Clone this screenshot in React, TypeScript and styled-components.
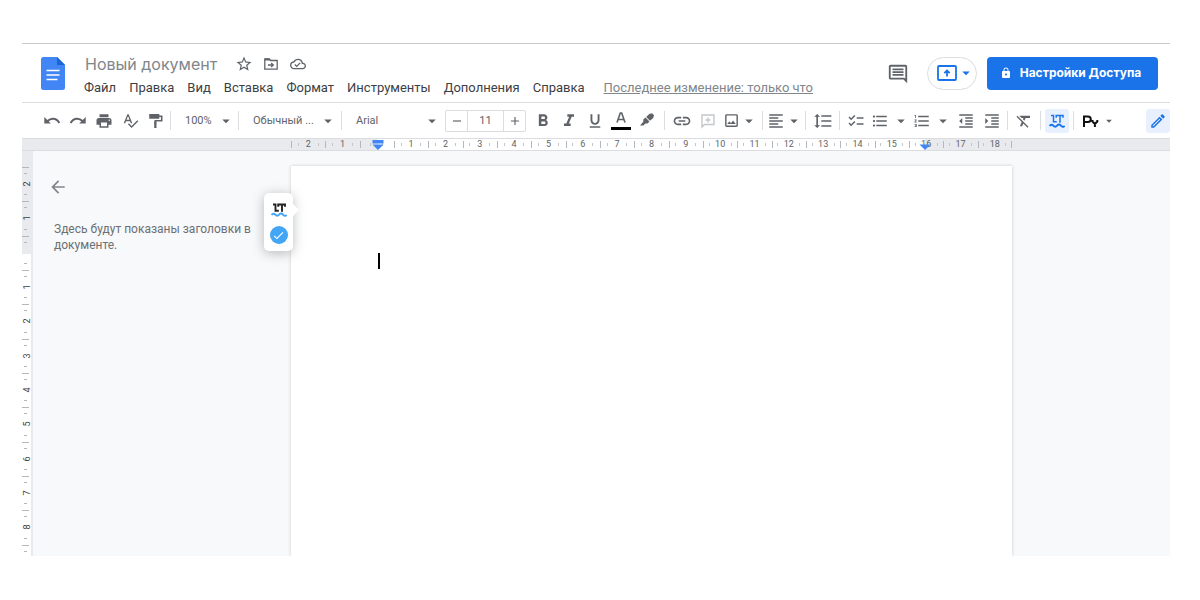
import React from "react";
import styled, { createGlobalStyle } from "styled-components";
import {
  MdAdd, MdArrowBack, MdArrowDropDown, MdCheck, MdChecklist, MdFormatAlignLeft, MdFormatBold,
  MdFormatClear, MdFormatIndentDecrease, MdFormatIndentIncrease, MdFormatItalic,
  MdFormatLineSpacing, MdFormatListBulleted, MdFormatListNumbered, MdFormatUnderlined, MdLink,
  MdOutlineCloudDone, MdOutlineComment, MdOutlineEdit, MdOutlineImage,
  MdLock, MdPrint, MdRemove, MdSpellcheck, MdStarOutline,
} from "react-icons/md";

const GlobalStyle = createGlobalStyle`
  *, *::before, *::after { box-sizing: border-box; }
  body { margin: 0; background: #fff; font-family: Roboto, "Liberation Sans", sans-serif; color: #3c4043; }
  button, input, select { font: inherit; color: inherit; }
  button { border: 0; padding: 0; background: none; cursor: pointer; }
  svg { display: block; flex: none; }
`;

const Page = styled.div`
  display: flex;
  flex-direction: column;
  height: 100vh;
  min-height: 400px;
  padding: 43px 30px 44px 22px;
`;

const Header = styled.header`
  display: flex;
  align-items: flex-start;
  flex: none;
  height: 60px;
  padding: 0 12px 0 19px;
  border-top: 1px solid #c9cacc;
  border-bottom: 1px solid #dadce0;
`;

const LogoLink = styled.a`
  margin-top: 13px;
`;

const TitleBlock = styled.div`
  flex: 1;
  min-width: 0;
  margin-left: 19px;
  padding-top: 10px;
`;

const TitleRow = styled.div`
  display: flex;
  align-items: center;
  height: 20px;
  color: #5f6368;
`;

const Title = styled.h1`
  margin: 0 19px 0 1px;
  font: 400 16px/20px Inter, sans-serif;
  color: #80868b;
  white-space: nowrap;
`;

const TitleIcon = styled.button`
  display: flex;
  justify-content: center;
  width: 16px;
  margin-right: 11px;
`;

const Menu = styled.nav`
  display: flex;
  align-items: center;
  gap: 13px;
  height: 28px;
  font-size: 13px;
  line-height: 20px;
  white-space: nowrap;
`;

const LastEdit = styled.a`
  margin-left: 6px;
  color: #80868b;
`;

const HeaderActions = styled.div`
  display: flex;
  align-items: center;
  margin-top: 13px;
  height: 33px;
  color: #5f6368;
`;

const PresentButton = styled.button`
  display: flex;
  align-items: center;
  justify-content: center;
  width: 50px;
  height: 33px;
  margin: 0 10px 0 18px;
  padding: 0 0 1px 8px;
  border: 1px solid #dadce0;
  border-radius: 17px;
  color: #1a73e8;
`;

const ShareButton = styled.button`
  display: flex;
  align-items: center;
  justify-content: center;
  gap: 8px;
  width: 171px;
  height: 33px;
  padding: 0 4px 1px 0;
  border-radius: 4px;
  background: #1a73e8;
  color: #fff;
  font: 700 12px/20px Inter, sans-serif;
  white-space: nowrap;
`;

const Toolbar = styled.div`
  display: flex;
  align-items: center;
  flex: none;
  height: 35px;
  padding-left: 17px;
  overflow: hidden;
  color: #5f6368;
`;

const Tool = styled.button<{ $active?: boolean; $width?: number; $gap?: number }>`
  display: flex;
  align-items: center;
  justify-content: center;
  gap: ${(p) => p.$gap ?? 0}px;
  flex: none;
  width: ${(p) => p.$width ?? 26}px;
  height: 24px;
  border-radius: 3px;
  background: ${(p) => (p.$active ? "#e8f0fe" : "none")};
  color: ${(p) => (p.$active ? "#1a73e8" : "inherit")};
`;

const Divider = styled.span<{ $before?: number; $after?: number }>`
  flex: none;
  width: 1px;
  height: 19px;
  margin: 0 ${(p) => p.$after ?? 4}px 0 ${(p) => p.$before ?? 4}px;
  background: #dadce0;
`;

const Picker = styled.button<{ $width: number }>`
  display: flex;
  align-items: center;
  justify-content: space-between;
  flex: none;
  width: ${(p) => p.$width}px;
  height: 24px;
  font-size: 11px;
  line-height: 16px;
  white-space: nowrap;
`;

const SizeBox = styled.div`
  display: flex;
  flex: none;
  width: 81px;
  height: 22px;
  margin: 0 4px;
  border: 1px solid #dadce0;
  border-radius: 2px;
`;

const SizeButton = styled.button`
  display: flex;
  align-items: center;
  justify-content: center;
  width: 21px;
`;

const SizeInput = styled.input`
  flex: 1;
  min-width: 0;
  padding: 0;
  border: solid #dadce0;
  border-width: 0 1px;
  outline: 0;
  background: none;
  font-size: 11px;
  text-align: center;
`;

const ModeSlot = styled.div`
  display: flex;
  flex: 1;
  justify-content: flex-end;
`;

const RulerRow = styled.div`
  display: grid;
  grid-template-columns: 269px 721fr 158fr;
  flex: none;
  height: 13px;
  border: solid #dadce0;
  border-width: 1px 0;
  background: #e8eaed;
`;

const Ruler = styled.div`
  position: relative;
  grid-column: 2;
  display: grid;
  grid-template-columns: repeat(21, 1fr);
  background: linear-gradient(90deg, #e8eaed 12%, #fff 12%, #fff 88%, #e8eaed 88%);
`;

const Mark = styled.span`
  display: flex;
  align-items: center;
  justify-content: space-evenly;
  min-width: 0;
  font-size: 9px;
  line-height: 11px;
  color: #5f6368;

  &::before, &::after {
    content: "";
    width: 1px;
    height: 3px;
    background: #c4c7ca;
  }
`;

const MarkCell = styled.span`
  display: grid;
  min-width: 0;
  background: linear-gradient(#b4b8bb, #b4b8bb) 0 50% / 1px 7px no-repeat;

  &:last-of-type {
    background:
      linear-gradient(#b4b8bb, #b4b8bb) 0 50% / 1px 7px no-repeat,
      linear-gradient(#b4b8bb, #b4b8bb) 100% 50% / 1px 7px no-repeat;
  }
`;

const IndentMarker = styled.svg<{ $at: number }>`
  position: absolute;
  top: 1px;
  left: ${(p) => p.$at}%;
  margin-left: -6px;
`;

const Workspace = styled.main`
  display: grid;
  grid-template-columns: 11px 258px 721fr 158fr;
  flex: 1;
  min-height: 0;
  overflow: hidden;
  background: #f8f9fa;
`;

const SideRuler = styled.div`
  overflow: hidden;
  padding-top: 16px;
  border-right: 2px solid #e8eaed;
  background: linear-gradient(#e8eaed 103px, #fff 103px);
`;

const SideMarks = styled.div`
  display: grid;
  grid-template-rows: repeat(12, 1fr);
  height: 412px;
`;

const SideCell = styled.span`
  display: flex;
  flex-direction: column;
  align-items: center;
  justify-content: space-evenly;
  background: linear-gradient(#b4b8bb, #b4b8bb) 0 0 / 7px 1px no-repeat;
  font-size: 9px;
  line-height: 8px;
  color: #3c4043;

  &::before, &::after {
    content: "";
    width: 3px;
    height: 1px;
    margin-right: 2px;
    background: #b4b8bb;
  }
`;

const SideNumber = styled.span`
  height: 8px;
  transform: rotate(-90deg);
`;

const Outline = styled.aside`
  position: relative;
  padding: 26px 8px 0 21px;
  font-size: 12px;
  line-height: 16px;
  color: #6b6f74;
`;

const BackButton = styled.button`
  display: flex;
  margin-left: -6px;
  color: #80868b;
`;

const OutlineHint = styled.p`
  margin: 24px 0 0;
`;

const Checker = styled.div`
  position: absolute;
  top: 42px;
  right: -2px;
  display: flex;
  flex-direction: column;
  align-items: center;
  gap: 9px;
  width: 29px;
  height: 58px;
  padding-top: 10px;
  border-radius: 5px;
  background: #fff;
  box-shadow: 0 2px 12px rgba(60, 64, 67, 0.35);
  z-index: 1;

  &::after {
    content: "";
    position: absolute;
    top: 11px;
    left: 29px;
    border: solid transparent;
    border-width: 6px 0 6px 6px;
    border-left-color: #fff;
  }
`;

const CheckerStatus = styled.button`
  display: flex;
  align-items: center;
  justify-content: center;
  width: 18px;
  height: 18px;
  border-radius: 9px;
  background: #42a5f5;
  color: #fff;
`;

const Sheet = styled.article`
  margin-top: 15px;
  padding: 87px 87px 0;
  background: #fff;
  box-shadow: 0 0 3px rgba(60, 64, 67, 0.25);
`;

const Caret = styled.span`
  display: block;
  width: 2px;
  height: 16px;
  background: #000;
`;

const menu = ["Файл", "Правка", "Вид", "Вставка", "Формат", "Инструменты", "Дополнения", "Справка"];
const horizontal = ["2", "1", "", ...Array.from({ length: 18 }, (_, i) => String(i + 1))];
const vertical = ["2", "1", "", "1", "2", "3", "4", "5", "6", "7", "8", ""];

const DocsLogo = () => (
  <svg width="24" height="33" viewBox="0 0 24 33">
    <path d="M2.500 0H16l8 8v22.500a2.500 2.500 0 0 1-2.500 2.500h-19A2.500 2.500 0 0 1 0 30.500v-28A2.500 2.500 0 0 1 2.500 0Z" fill="#4285f4" />
    <path d="M16 0l8 8h-8Z" fill="#1967d2" />
    <path d="M5.500 13.500h13M5.500 18h13M5.500 22.500h11" stroke="#fff" strokeWidth="1.600" />
  </svg>
);

const FolderMoveIcon = () => (
  <svg width="16" height="16" viewBox="0 0 16 16" fill="none" stroke="currentColor" strokeWidth="1.300">
    <path d="M1.800 3h4.400l1.400 1.500h6.600V13.200H1.800Z" />
    <path d="M1.800 2.600h4.400L8 4.500H1.800Z" fill="currentColor" stroke="none" />
    <path d="M5 9h5M8.200 7 10.300 9l-2.100 2" />
  </svg>
);

const UndoIcon = ({ flip = false }) => (
  <svg width="18" height="18" viewBox="0 0 18 18" fill="none" stroke="currentColor" strokeWidth="2">
    <g transform={flip ? "matrix(-1 0 0 1 18 0)" : undefined}>
      <path d="M4.500 9C8 5.500 13.800 5.700 16.300 11" />
      <path d="M1.300 5V11.500H7.800Z" fill="currentColor" stroke="none" />
    </g>
  </svg>
);

const RollerIcon = () => (
  <svg width="16" height="16" viewBox="0 0 16 16" fill="none" stroke="currentColor" strokeWidth="1.600">
    <path d="M2 1.800h8.500v3.200H2Z" fill="currentColor" />
    <path d="M11 3.300h2.700v4.500H7.300V11" />
    <path d="M6.200 8.500h2.300V15H6.200Z" fill="currentColor" stroke="none" />
  </svg>
);

const TextColorIcon = () => (
  <svg width="20" height="22" viewBox="0 0 20 22">
    <path d="M6 12.500 9.300 3h1.400L14 12.500M7.200 9.500h5.600" fill="none" stroke="currentColor" strokeWidth="1.600" />
    <path d="M0 17h20v3H0Z" fill="#000" />
  </svg>
);

const MarkerIcon = () => (
  <svg width="16" height="16" viewBox="0 0 16 16" fill="currentColor">
    <path d="M10.200 1 13 .2 15 2.200 14.200 5 11 7.800 7.200 4ZM6.500 4.600 10.400 8.500 8.600 10.600H6.300L4.500 12.400H1L4.300 8.800V6.600Z" />
  </svg>
);

const CommentAddIcon = () => (
  <svg width="16" height="16" viewBox="0 0 16 16" fill="none" stroke="#c4c7ca" strokeWidth="1.400">
    <path d="M2 14V2h12v9.500H4.500ZM8 4.500v5M5.500 7h5" />
  </svg>
);

const PresentIcon = () => (
  <svg width="20" height="16" viewBox="0 0 20 16" fill="none" stroke="currentColor" strokeWidth="1.800">
    <rect x="1" y="1" width="18" height="14" rx="1" />
    <path d="M10 11.500V6M7.300 8.200 10 5.500l2.700 2.700" />
  </svg>
);

const LtIcon = ({ ink, wave, weight }: { ink: string; wave: string; weight: number }) => (
  <svg width="16" height="14" viewBox="0 0 16 14" fill="none" strokeWidth={weight}>
    <path d="M2 1.500H4.500V7.800H7.800M7.200 3.800V1.500H14V3.800M11 1.500V8.800" stroke={ink} />
    <path d="M.500 12q1.900-2.500 3.800-.3t3.800 0 3.800 0 3.800 .3" stroke={wave} strokeWidth="2" />
  </svg>
);

const PyIcon = () => (
  <svg width="17" height="16" viewBox="0 0 17 16" fill="none" stroke="#111" strokeWidth="2">
    <path d="M2 14V3.500h4a2.800 2.800 0 0 1 0 5.600H2M10.500 7v1.500l2.400 2.500 2.400-2.500V7M12.900 10.500V14" />
  </svg>
);

export default function App() {
  return (
    <>
      <GlobalStyle />
      <Page>
        <Header>
          <LogoLink href="#" aria-label="Документы"><DocsLogo /></LogoLink>
          <TitleBlock>
            <TitleRow>
              <Title>Новый документ</Title>
              <TitleIcon aria-label="Пометить"><MdStarOutline size={18} /></TitleIcon>
              <TitleIcon aria-label="Переместить"><FolderMoveIcon /></TitleIcon>
              <TitleIcon aria-label="Сохранено"><MdOutlineCloudDone size={16} /></TitleIcon>
            </TitleRow>
            <Menu>
              {menu.map((m) => <button key={m}>{m}</button>)}
              <LastEdit href="#">Последнее изменение: только что</LastEdit>
            </Menu>
          </TitleBlock>
          <HeaderActions>
            <button aria-label="Комментарии"><MdOutlineComment size={22} /></button>
            <PresentButton aria-label="Презентация"><PresentIcon /><MdArrowDropDown size={18} /></PresentButton>
            <ShareButton><MdLock size={12} />Настройки Доступа</ShareButton>
          </HeaderActions>
        </Header>

        <Toolbar>
          <Tool aria-label="Отменить"><UndoIcon /></Tool>
          <Tool aria-label="Повторить"><UndoIcon flip /></Tool>
          <Tool aria-label="Печать"><MdPrint size={18} /></Tool>
          <Tool aria-label="Правописание"><MdSpellcheck size={17} /></Tool>
          <Tool aria-label="Копировать форматирование"><RollerIcon /></Tool>
          <Divider $before={1} $after={14} />
          <Picker $width={50}>100%<MdArrowDropDown size={18} /></Picker>
          <Divider $before={3} $after={14} />
          <Picker $width={84}>Обычный ...<MdArrowDropDown size={18} /></Picker>
          <Divider $after={14} />
          <Picker $width={85}>Arial<MdArrowDropDown size={18} /></Picker>
          <SizeBox>
            <SizeButton aria-label="Уменьшить"><MdRemove size={14} /></SizeButton>
            <SizeInput aria-label="Размер шрифта" defaultValue="11" />
            <SizeButton aria-label="Увеличить"><MdAdd size={14} /></SizeButton>
          </SizeBox>
          <Tool aria-label="Полужирный"><MdFormatBold size={20} /></Tool>
          <Tool aria-label="Курсив"><MdFormatItalic size={20} /></Tool>
          <Tool aria-label="Подчеркнутый"><MdFormatUnderlined size={18} /></Tool>
          <Tool aria-label="Цвет текста"><TextColorIcon /></Tool>
          <Tool aria-label="Цвет выделения"><MarkerIcon /></Tool>
          <Divider $before={4} $after={4} />
          <Tool aria-label="Ссылка"><MdLink size={20} /></Tool>
          <Tool aria-label="Комментарий"><CommentAddIcon /></Tool>
          <Tool aria-label="Изображение" $width={38}><MdOutlineImage size={17} /><MdArrowDropDown size={18} /></Tool>
          <Divider $before={3} $after={5} />
          <Tool aria-label="Выравнивание" $width={34}><MdFormatAlignLeft size={18} /><MdArrowDropDown size={18} /></Tool>
          <Divider $before={3} $after={4} />
          <Tool aria-label="Интервал"><MdFormatLineSpacing size={20} /></Tool>
          <Divider $before={3} $after={3} />
          <Tool aria-label="Контрольный список"><MdChecklist size={18} /></Tool>
          <Tool aria-label="Маркированный список" $width={42} $gap={3}><MdFormatListBulleted size={18} /><MdArrowDropDown size={18} /></Tool>
          <Tool aria-label="Нумерованный список" $width={42} $gap={3}><MdFormatListNumbered size={18} /><MdArrowDropDown size={18} /></Tool>
          <Tool aria-label="Уменьшить отступ"><MdFormatIndentDecrease size={18} /></Tool>
          <Tool aria-label="Увеличить отступ"><MdFormatIndentIncrease size={18} /></Tool>
          <Divider $before={2} $after={3} />
          <Tool aria-label="Очистить"><MdFormatClear size={18} /></Tool>
          <Divider $before={3} $after={4} />
          <Tool aria-label="LanguageTool" $active $width={24}><LtIcon ink="#1a73e8" wave="#1a73e8" weight={1.5} /></Tool>
          <Divider />
          <Tool aria-label="Способ ввода" $width={42} $gap={3}><PyIcon /><MdArrowDropDown size={14} /></Tool>
          <ModeSlot><Tool aria-label="Редактирование" $active $width={24}><MdOutlineEdit size={18} /></Tool></ModeSlot>
        </Toolbar>

        <RulerRow>
          <Ruler>
            {horizontal.map((n, i) => <MarkCell key={i}><Mark>{n}</Mark></MarkCell>)}
            <IndentMarker $at={12} width="12" height="10" fill="#4285f4"><path d="M.500 0h11v3.500H.500ZM.500 4.500h11L6 10Z" /></IndentMarker>
            <IndentMarker $at={88} width="12" height="10" fill="#4285f4"><path d="M.500 4.500h11L6 10Z" /></IndentMarker>
          </Ruler>
        </RulerRow>

        <Workspace>
          <SideRuler>
            <SideMarks>
              {vertical.map((n, i) => <SideCell key={i}><SideNumber>{n}</SideNumber></SideCell>)}
            </SideMarks>
          </SideRuler>
          <Outline>
            <BackButton aria-label="Назад"><MdArrowBack size={20} /></BackButton>
            <OutlineHint>Здесь будут показаны заголовки в документе.</OutlineHint>
            <Checker>
              <LtIcon ink="#222" wave="#42a5f5" weight={1.9} />
              <CheckerStatus aria-label="Ошибок нет"><MdCheck size={13} /></CheckerStatus>
            </Checker>
          </Outline>
          <Sheet><Caret /></Sheet>
        </Workspace>
      </Page>
    </>
  );
}
